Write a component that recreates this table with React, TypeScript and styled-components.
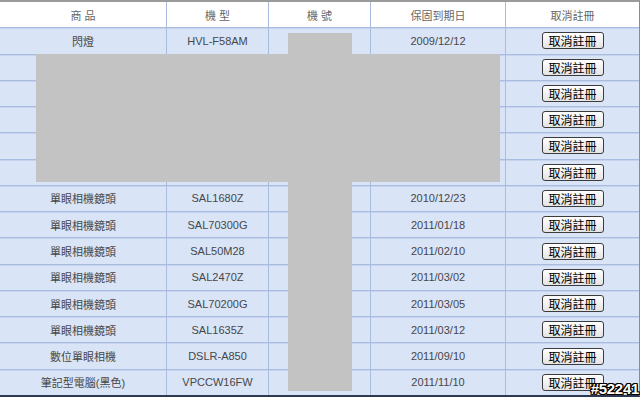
import React from "react";
import styled, { createGlobalStyle } from "styled-components";

const Global = createGlobalStyle`
  html, body { margin: 0; padding: 0; background: #ffffff; }
  body { font-family: "Liberation Sans", "Noto Sans CJK TC", Arial, sans-serif; }
`;

const Frame = styled.div`
  position: relative;
  width: 640px;
  height: 398px;
  overflow: hidden;
  background: #ffffff;
`;

const Table = styled.div`
  display: grid;
  grid-template-columns: 166px 101px 101px 134px 133px;
  grid-template-rows: repeat(15, 1fr);
  column-gap: 1px;
  row-gap: 1px;
  width: 639px;
  height: 393px;
  background: #a9bcdf;
  border-top: 2px solid #9a9a9a;
  border-right: 1px solid #8c8c8c;
  border-bottom: 2px solid #2c3850;
`;

const Cell = styled.div<{ $head?: boolean }>`
  display: flex;
  align-items: center;
  justify-content: center;
  background: ${(p) => (p.$head ? "#ffffff" : "#d9e4f7")};
  color: ${(p) => (p.$head ? "#666666" : "#474747")};
  font-family: "Liberation Sans", "Noto Sans CJK TC", Arial, sans-serif;
  font-size: 11px;
  white-space: nowrap;
  box-shadow: ${(p) => (p.$head ? "none" : "inset 0 1px 0 #c6d4ee")};
`;

const CancelButton = styled.button`
  width: 62px;
  height: 17px;
  padding: 0;
  margin: 0;
  border: 1px solid #3c3c3c;
  border-radius: 3px;
  background: linear-gradient(#ffffff, #e4e4e4);
  color: #000000;
  font-family: "Noto Sans CJK TC", "Liberation Sans", sans-serif;
  font-size: 12px;
  line-height: 15px;
  cursor: pointer;
`;

const Redaction = styled.div<{ $l: number; $t: number; $w: number; $h: number }>`
  position: absolute;
  left: ${(p) => p.$l}px;
  top: ${(p) => p.$t}px;
  width: ${(p) => p.$w}px;
  height: ${(p) => p.$h}px;
  background: #c3c3c3;
`;

const Watermark = styled.div`
  position: absolute;
  right: 1px;
  bottom: 1px;
  font-family: "Liberation Sans", Arial, sans-serif;
  font-weight: bold;
  font-size: 15px;
  color: #ffffff;
  letter-spacing: -0.3px;
  text-shadow: 1px 0 0 #000, -1px 0 0 #000, 0 1px 0 #000, 0 -1px 0 #000,
    1px 1px 0 #000, -1px -1px 0 #000, 1px -1px 0 #000, -1px 1px 0 #000;
`;

type Row = { product: string; model: string; date: string };

const rows: Row[] = [
  { product: "閃燈", model: "HVL-F58AM", date: "2009/12/12" },
  { product: "", model: "", date: "" },
  { product: "", model: "", date: "" },
  { product: "", model: "", date: "" },
  { product: "", model: "", date: "" },
  { product: "", model: "", date: "" },
  { product: "單眼相機鏡頭", model: "SAL1680Z", date: "2010/12/23" },
  { product: "單眼相機鏡頭", model: "SAL70300G", date: "2011/01/18" },
  { product: "單眼相機鏡頭", model: "SAL50M28", date: "2011/02/10" },
  { product: "單眼相機鏡頭", model: "SAL2470Z", date: "2011/03/02" },
  { product: "單眼相機鏡頭", model: "SAL70200G", date: "2011/03/05" },
  { product: "單眼相機鏡頭", model: "SAL1635Z", date: "2011/03/12" },
  { product: "數位單眼相機", model: "DSLR-A850", date: "2011/09/10" },
  { product: "筆記型電腦(黑色)", model: "VPCCW16FW", date: "2011/11/10" },
];

const headers = ["商 品", "機 型", "機 號", "保固到期日", "取消註冊"];

export default function App() {
  return (
    <Frame>
      <Global />
      <Table>
        {headers.map((h) => (
          <Cell $head key={h}>
            {h}
          </Cell>
        ))}
        {rows.map((r, i) => (
          <React.Fragment key={i}>
            <Cell>{r.product}</Cell>
            <Cell>{r.model}</Cell>
            <Cell />
            <Cell>{r.date}</Cell>
            <Cell>
              <CancelButton>取消註冊</CancelButton>
            </Cell>
          </React.Fragment>
        ))}
      </Table>
      <Redaction $l={36} $t={54} $w={464} $h={128} />
      <Redaction $l={288} $t={33} $w={64} $h={358} />
      <Watermark>#52241</Watermark>
    </Frame>
  );
}
